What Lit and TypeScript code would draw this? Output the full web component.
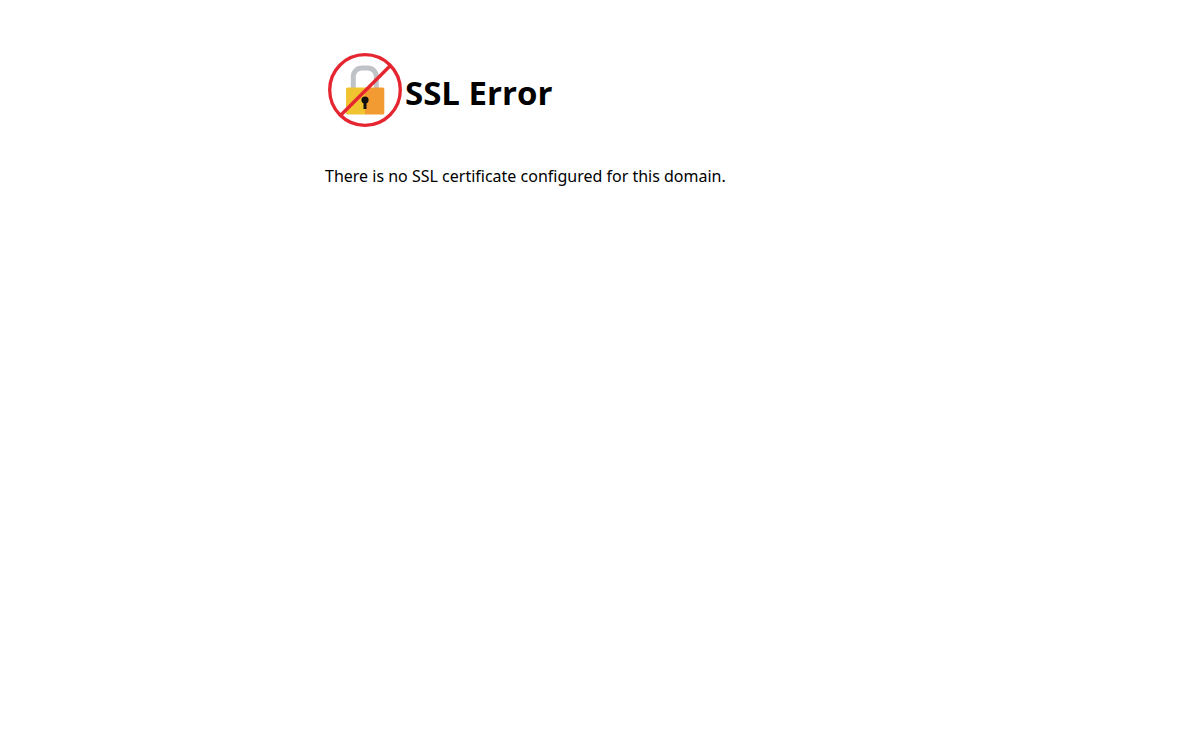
import { LitElement, html, css } from "lit";
import { customElement } from "lit/decorators.js";

@customElement("app-root")
export class AppRoot extends LitElement {
  static styles = css`
    :host {
      display: block;
      min-height: 100vh;
      background: #fff;
      color: #000;
      font-family: "Noto Sans", "Open Sans", sans-serif;
    }
    .page {
      box-sizing: border-box;
      max-width: 550px;
      margin: 0 auto;
      padding-top: 50px;
    }
    .header {
      display: flex;
      align-items: center;
      margin-bottom: 34px;
    }
    .icon {
      flex: none;
      width: 80px;
      height: 80px;
    }
    .title {
      margin: 0;
      padding-top: 6px;
      font-family: "Open Sans", "Noto Sans", sans-serif;
      font-size: 33px;
      line-height: 44px;
      font-weight: 700;
    }
    .message {
      margin: 0;
      font-size: 16px;
      line-height: 24px;
    }
  `;

  render() {
    return html`
      <main class="page">
        <header class="header">
          <svg class="icon" viewBox="0 0 80 80" aria-hidden="true">
            <path d="M28.3 39V26.5a8.5 8.5 0 0 1 8.5-8.5h6a8.5 8.5 0 0 1 8.5 8.5V39" fill="none" stroke="#bfc3c8" stroke-width="5" />
            <path d="M40 37.5H22.5a1.5 1.5 0 0 0-1.5 1.5v24a1.5 1.5 0 0 0 1.5 1.5H40z" fill="#f0c330" />
            <path d="M40 37.5h17.8a1.5 1.5 0 0 1 1.5 1.5v24a1.5 1.5 0 0 1-1.5 1.5H40z" fill="#f19b32" />
            <circle cx="40" cy="50" r="3.6" fill="#111" />
            <rect x="38.5" y="51" width="3" height="8" fill="#111" />
            <path d="M15.7 65.2 65.2 15.7" stroke="#e5252f" stroke-width="3.4" />
            <circle cx="40" cy="40" r="35.3" fill="none" stroke="#e5252f" stroke-width="3.3" />
          </svg>
          <h1 class="title">SSL Error</h1>
        </header>
        <p class="message">There is no SSL certificate configured for this domain.</p>
      </main>
    `;
  }
}
